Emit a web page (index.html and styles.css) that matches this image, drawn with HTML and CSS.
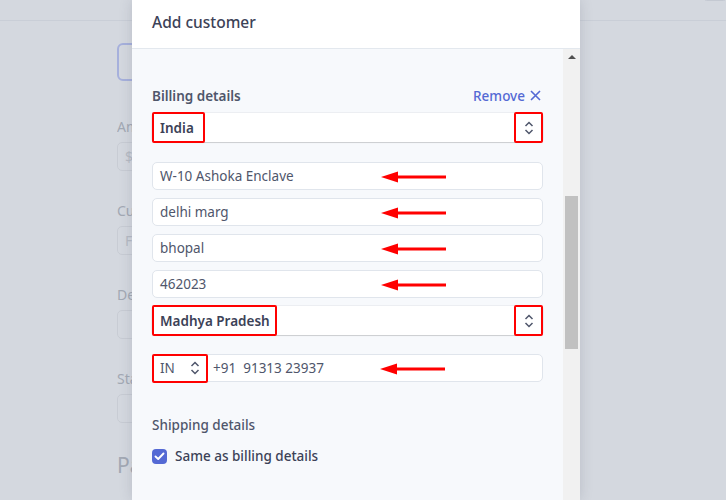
FILE: index.html
```html
<!DOCTYPE html>
<html>
<head>
<meta charset="utf-8">
<link rel="stylesheet" href="styles.css">
</head>
<body>
<div class="page">
  <div class="topbar"><span class="topbtn"></span></div>
  <div class="bg-clip">
    <div class="bg-content">
      <div class="bg-button"></div>
      <div class="bg-field">
        <div class="bg-label">Am</div>
        <div class="bg-input">$</div>
      </div>
      <div class="bg-field">
        <div class="bg-label">Cu</div>
        <div class="bg-input">F</div>
      </div>
      <div class="bg-field">
        <div class="bg-label">De</div>
        <div class="bg-input"></div>
      </div>
      <div class="bg-field">
        <div class="bg-label">Sta</div>
        <div class="bg-input"></div>
      </div>
      <div class="bg-heading">Pa</div>
    </div>
  </div>

  <div class="modal">
    <div class="modal-header">Add customer</div>
    <div class="modal-body">
      <div class="modal-content">
        <div class="section-head">
          <span class="section-title">Billing details</span>
          <span class="remove">Remove <svg width="11" height="11" viewBox="0 0 11 11"><path d="M1 1L10 10M10 1L1 10" stroke="#5469d4" stroke-width="1.6" fill="none"/></svg></span>
        </div>
        <div class="select">
          <span class="mark mark-india">India</span>
          <span class="chev-mark"><svg width="10" height="14" viewBox="0 0 10 14"><path d="M1.5 5L5 1.5L8.5 5M1.5 9L5 12.5L8.5 9" stroke="#4f566b" stroke-width="1.5" fill="none"/></svg></span>
        </div>
        <div class="inputs">
          <div class="input">W-10 Ashoka Enclave<svg class="arrow" width="66" height="12" viewBox="0 0 66 12"><path d="M0 6L17 0.5V11.5Z" fill="#f00"/><rect x="14" y="4.5" width="51" height="3" fill="#f00"/></svg></div>
          <div class="input">delhi marg<svg class="arrow" width="66" height="12" viewBox="0 0 66 12"><path d="M0 6L17 0.5V11.5Z" fill="#f00"/><rect x="14" y="4.5" width="51" height="3" fill="#f00"/></svg></div>
          <div class="input">bhopal<svg class="arrow" width="66" height="12" viewBox="0 0 66 12"><path d="M0 6L17 0.5V11.5Z" fill="#f00"/><rect x="14" y="4.5" width="51" height="3" fill="#f00"/></svg></div>
          <div class="input">462023<svg class="arrow" width="66" height="12" viewBox="0 0 66 12"><path d="M0 6L17 0.5V11.5Z" fill="#f00"/><rect x="14" y="4.5" width="51" height="3" fill="#f00"/></svg></div>
          <div class="select">
            <span class="mark mark-state">Madhya Pradesh</span>
            <span class="chev-mark"><svg width="10" height="14" viewBox="0 0 10 14"><path d="M1.5 5L5 1.5L8.5 5M1.5 9L5 12.5L8.5 9" stroke="#4f566b" stroke-width="1.5" fill="none"/></svg></span>
          </div>
        </div>
        <div class="input phone">
          <span class="mark mark-country">IN<svg width="10" height="14" viewBox="0 0 10 14"><path d="M1.5 5L5 1.5L8.5 5M1.5 9L5 12.5L8.5 9" stroke="#4f566b" stroke-width="1.5" fill="none"/></svg></span>
          <span class="phone-num">+91&nbsp; 91313 23937</span>
          <svg class="arrow" width="66" height="12" viewBox="0 0 66 12"><path d="M0 6L17 0.5V11.5Z" fill="#f00"/><rect x="14" y="4.5" width="51" height="3" fill="#f00"/></svg>
        </div>
        <div class="section-title shipping">Shipping details</div>
        <label class="check-row">
          <span class="checkbox"><svg width="11" height="9" viewBox="0 0 11 9"><path d="M1.5 4.5L4.2 7L9.5 1.5" stroke="#fff" stroke-width="1.9" fill="none" stroke-linecap="round" stroke-linejoin="round"/></svg></span>
          <span>Same as billing details</span>
        </label>
      </div>
      <div class="scrollbar">
        <div class="sb-arrow"></div>
        <div class="sb-thumb"></div>
      </div>
    </div>
  </div>
</div>
</body>
</html>
```
FILE: styles.css
```css
* { box-sizing: border-box; }
html, body { margin: 0; padding: 0; }
body {
  font-family: "Noto Sans", "Open Sans", sans-serif;
  background: #d4d8df;
  width: 726px;
  height: 500px;
  overflow: hidden;
}
.page {
  position: relative;
  width: 726px;
  height: 500px;
  background: #d4d8df;
}
.topbar {
  height: 21px;
  border-bottom: 1px solid #c9ced7;
  position: relative;
}
.topbtn {
  position: absolute;
  right: 0;
  top: -4px;
  width: 22px;
  height: 5px;
  border: 1px solid #c4c9d2;
  border-radius: 3px;
}
.bg-clip {
  margin-left: 117px;
  width: 15px;
  overflow: hidden;
}
.bg-content {
  padding-top: 22px;
  width: 200px;
  display: flex;
  flex-direction: column;
}
.bg-button {
  width: 120px;
  height: 38px;
  border: 2px solid #a6b0dc;
  border-radius: 6px;
  margin-bottom: 37px;
}
.bg-field {
  display: flex;
  flex-direction: column;
  gap: 6px;
  margin-bottom: 31px;
}
.bg-label {
  font-size: 14px;
  color: #a3a9b4;
  line-height: 18px;
  white-space: nowrap;
}
.bg-input {
  width: 200px;
  height: 29px;
  border: 1px solid #c8ccd4;
  border-radius: 5px;
  padding-left: 7px;
  color: #b6bbc4;
  font-size: 14px;
  line-height: 27px;
}
.bg-heading {
  font-size: 21px;
  color: #a3a9b4;
  margin-top: -3px;
  white-space: nowrap;
}
.modal {
  position: absolute;
  left: 132px;
  top: 0;
  width: 448px;
  height: 500px;
  background: #f7f9fc;
  box-shadow: 0 0 12px rgba(60, 66, 87, 0.18);
  display: flex;
  flex-direction: column;
}
.modal-header {
  height: 49px;
  background: #fff;
  border-bottom: 1px solid #e3e8ee;
  padding: 11px 0 0 20px;
  font-size: 15.5px;
  font-weight: 500;
  color: #3c4257;
  line-height: 22px;
}
.modal-body {
  flex: 1;
  display: flex;
  min-height: 0;
}
.modal-content {
  flex: 1;
  padding: 36px 20px 0 20px;
  display: flex;
  flex-direction: column;
}
.section-head {
  display: flex;
  justify-content: space-between;
  align-items: center;
  height: 21px;
  margin-bottom: 7px;
}
.section-title {
  font-size: 13.5px;
  font-weight: 600;
  color: #4f566b;
  line-height: 20px;
}
.remove {
  font-size: 13.5px;
  font-weight: 500;
  color: #5469d4;
  display: flex;
  align-items: center;
  gap: 5px;
  padding-right: 2px;
}
.select {
  height: 29px;
  background: #fff;
  border-radius: 4px;
  box-shadow: 0 1px 1px rgba(0,0,0,0.14), 0 0 0 1px rgba(60,66,87,0.06);
  display: flex;
  justify-content: space-between;
  align-items: stretch;
  font-size: 13.5px;
  font-weight: 600;
  color: #3c4257;
}
.mark {
  border: 2px solid #f00;
  border-radius: 2px;
  display: flex;
  align-items: center;
  padding-left: 6px;
  margin: -1px 0;
}
.mark-india { width: 53px; }
.mark-state { width: 125px; }
.chev-mark {
  width: 29px;
  border: 2px solid #f00;
  border-radius: 2px;
  display: flex;
  align-items: center;
  justify-content: center;
  margin: -1px 0;
}
.inputs {
  display: flex;
  flex-direction: column;
  gap: 8px;
  margin-top: 20px;
}
.input {
  position: relative;
  height: 28px;
  background: #fff;
  border: 1px solid #e0e5ec;
  border-radius: 5px;
  padding-left: 7px;
  font-size: 13.5px;
  color: #4f566b;
  display: flex;
  align-items: center;
}
.arrow {
  position: absolute;
  left: 228px;
  top: 8px;
}
.phone {
  margin-top: 19px;
  padding-left: 0;
}
.mark-country {
  width: 56px;
  height: 29px;
  margin: 0 0 0 -1px;
  font-weight: 400;
  justify-content: space-between;
  padding-right: 6px;
  align-self: center;
}
.phone-num {
  margin-left: 5px;
}
.phone .arrow { left: 227px; }
.shipping {
  margin-top: 33px;
  font-weight: 500;
}
.check-row {
  display: flex;
  align-items: center;
  gap: 8px;
  margin-top: 12px;
  font-size: 13.5px;
  font-weight: 500;
  color: #3c4257;
}
.checkbox {
  width: 15px;
  height: 15px;
  border-radius: 4px;
  background: #5469d4;
  display: flex;
  align-items: center;
  justify-content: center;
}
.scrollbar {
  width: 17px;
  background: #f1f1f1;
  position: relative;
  display: flex;
  flex-direction: column;
  align-items: center;
}
.sb-arrow {
  margin-top: 6px;
  width: 0;
  height: 0;
  border-left: 4px solid transparent;
  border-right: 4px solid transparent;
  border-bottom: 4px solid #505050;
}
.sb-thumb {
  margin-top: 137px;
  width: 13px;
  height: 153px;
  background: #c1c1c1;
}
```
